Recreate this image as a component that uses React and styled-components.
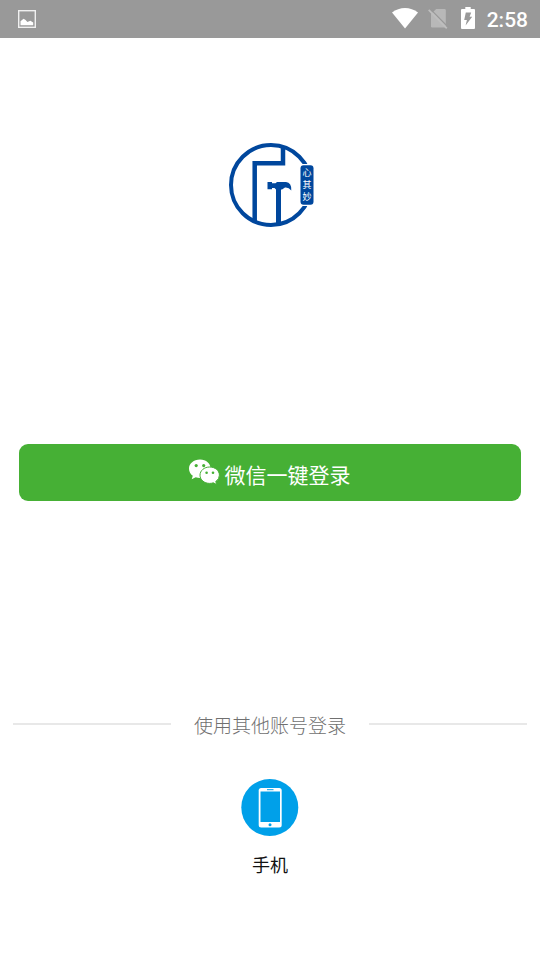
import React from 'react';
import styled, { createGlobalStyle } from 'styled-components';

const App = () => {
    return (
        <>
            <GlobalStyle />
            <StyledPage>
                <StyledStatusBar>
                    <PictureIcon />
                    <StyledStatusGroup>
                        <WifiIcon />
                        <NoSimIcon />
                        <StyledBattery>
                            <BatteryIcon />
                            <StyledTime>2:58</StyledTime>
                        </StyledBattery>
                    </StyledStatusGroup>
                </StyledStatusBar>

                <StyledMain>
                    <StyledLogoBox>
                        <Logo />
                    </StyledLogoBox>

                    <StyledWechatBtn type="button">
                        <WechatIcon />
                        <StyledBtnText>微信一键登录</StyledBtnText>
                    </StyledWechatBtn>

                    <StyledDivider>
                        <StyledLine />
                        <StyledDividerText>使用其他账号登录</StyledDividerText>
                        <StyledLine />
                    </StyledDivider>

                    <StyledPhoneBtn type="button">
                        <PhoneIcon />
                        <span>手机</span>
                    </StyledPhoneBtn>
                </StyledMain>
            </StyledPage>
        </>
    )
}

const PictureIcon = () => (
    <svg width="20" height="20" viewBox="0 0 20 20">
        <rect x="1.7" y="1.7" width="16.6" height="16.6" fill="none" stroke="#f0f0f0" strokeWidth="1.4" />
        <path d="M3.5 16.3V12.2L5 11L6.6 9.8L8.6 11L10.4 13L13.4 11.8L16.2 13.4V16.3Z" fill="#fff" />
    </svg>
)

const WifiIcon = () => (
    <svg width="28" height="22" viewBox="0 0 28 22">
        <path d="M1 5.6C8.5 -0.5 19.5 -0.5 27 5.6L14 21.6Z" fill="#fff" />
    </svg>
)

const NoSimIcon = () => (
    <svg width="22" height="22" viewBox="0 0 22 22">
        <path d="M4 7L9.2 2H17.5Q18.8 2 18.8 3.3V20.5H5.3Q4 20.5 4 19.2Z" fill="#b8b8b8" />
        <path d="M3.2 1.8L21 20" stroke="#999" strokeWidth="1.2" />
        <path d="M1.700 2.800L19.800 21.300" stroke="#bebebe" strokeWidth="1.800" />
    </svg>
)

const BatteryIcon = () => (
    <svg width="14" height="22" viewBox="0 0 14 22">
        <path d="M4.3 0H9.7V2H13Q14 2 14 3V21Q14 22 13 22H1Q0 22 0 21V3Q0 2 1 2H4.3Z" fill="#fff" />
        <path d="M4.8 5.5H10.2L8.6 9.8H11.2L4.6 18.6L5.9 13H3.2Z" fill="#999" />
    </svg>
)

const Logo = () => (
    <svg width="86" height="86" viewBox="0 0 86 86" role="img" aria-label="心其妙">
        <g fill="none" stroke="#00479d">
            <circle cx="43" cy="43" r="40" strokeWidth="4" />
            <path d="M26.7 79V21.2H55V4" strokeWidth="4.5" />
            <path d="M50.5 45V82" strokeWidth="5" />
        </g>
        <path
            d="M39.5 40H44V41.2H47.5L49 40H58Q63.8 40.8 63.3 48.5Q60.5 45 57 45.5L54 47.5H48L46.5 46H44V47.3H39.5Z"
            fill="#00479d"
        />
        <rect x="71.500" y="22" width="14.500" height="42" rx="3.500" fill="#fff" />
        <rect x="72.500" y="23.300" width="13" height="39.500" rx="3" fill="#00479d" />
        <StyledSeal x="79" y="34">心</StyledSeal>
        <StyledSeal x="79" y="46">其</StyledSeal>
        <StyledSeal x="79" y="58">妙</StyledSeal>
    </svg>
)

const WechatIcon = () => (
    <svg width="32" height="26" viewBox="0 0 32 26">
        <path d="M12 0.5C5.7 0.5 1 4.5 1 9.7C1 12.7 2.5 15 4.8 16.8L3.7 20.2L7.7 18.2Q9.7 18.9 12 18.9C18.3 18.9 22.6 14.9 22.6 9.7C22.6 4.5 18.3 0.5 12 0.5Z" fill="#fff" />
        <path d="M21.7 8C16.2 8 12 11.6 12 16.2C12 20.8 16.2 24.4 21.7 24.4Q23.7 24.4 25.3 23.8L28.7 25.6L27.8 22.5Q31.4 20 31.4 16.2C31.4 11.6 27.2 8 21.7 8Z" fill="#fff" stroke="#46b035" strokeWidth="1" />
        <g fill="#46b035">
            <circle cx="8.2" cy="6.6" r="1.6" />
            <circle cx="15.7" cy="6.6" r="1.6" />
            <circle cx="18.6" cy="13.8" r="1.3" />
            <circle cx="25" cy="13.8" r="1.3" />
        </g>
    </svg>
)

const PhoneIcon = () => (
    <svg width="58" height="58" viewBox="0 0 58 58">
        <circle cx="28.8" cy="28.5" r="28.5" fill="#00a0e9" />
        <rect x="17.7" y="9" width="23" height="39.5" rx="2.5" fill="#fff" />
        <rect x="19.5" y="12.5" width="19.5" height="30.5" fill="#00a0e9" />
        <path d="M26 10.7H32.5" stroke="#00a0e9" strokeWidth="1" />
        <circle cx="29" cy="45.7" r="1.5" fill="#00a0e9" />
    </svg>
)

const GlobalStyle = createGlobalStyle`
  body {
    margin: 0;
    background: #fff;
    font-family: Roboto, "Noto Sans CJK SC", sans-serif;
  }
`

const StyledPage = styled.div`
  min-height: 100vh;

  display: flex;
  flex-direction: column;
`

const StyledStatusBar = styled.header`
  height: 38px;
  padding: 0 12px 0 17px;
  box-sizing: border-box;
  background: #999;

  display: flex;
  align-items: center;
  justify-content: space-between;
`

const StyledStatusGroup = styled.div`
  padding-bottom: 2px;

  display: flex;
  align-items: center;
  gap: 8px;
`

const StyledBattery = styled.div`
  margin-left: 4px;

  display: flex;
  align-items: center;
  gap: 12px;
`

const StyledTime = styled.span`
  padding-top: 4px;
  color: #fff;
  font-size: 21px;
  font-weight: 500;
  line-height: 24px;
`

const StyledMain = styled.main`
  padding-top: 104px;

  display: flex;
  flex-direction: column;
`

const StyledLogoBox = styled.div`
  height: 86px;
  padding-left: 2px;

  display: flex;
  justify-content: center;
`

const StyledSeal = styled.text`
  fill: #fff;
  font-family: "Noto Sans CJK SC", sans-serif;
  font-size: 9px;
  text-anchor: middle;
`

const StyledWechatBtn = styled.button`
  height: 57px;
  margin: 216px 19px 0;
  padding: 0 2px 0 0;
  border: none;
  border-radius: 9px;
  background: #46b035;
  color: #fff;
  font-family: inherit;
  cursor: pointer;

  display: flex;
  align-items: center;
  justify-content: center;
  gap: 5px;

  svg {
    margin-bottom: 2px;
  }
`

const StyledBtnText = styled.span`
  padding-top: 6px;
  font-size: 21px;
  line-height: 30px;
`

const StyledDivider = styled.div`
  margin: 205px 13px 0;

  display: flex;
  align-items: center;
  gap: 23px;
`

const StyledLine = styled.span`
  height: 2px;
  background: #e8e8e8;

  flex: 1;
`

const StyledDividerText = styled.span`
  padding-top: 6px;
  color: #707070;
  font-size: 19px;
  font-weight: 300;
  line-height: 30px;
`

const StyledPhoneBtn = styled.button`
  margin-top: 37px;
  padding: 0;
  border: none;
  background: none;
  color: #111;
  font-family: inherit;
  font-size: 18px;
  line-height: 26px;
  cursor: pointer;

  display: flex;
  flex-direction: column;
  align-items: center;
  align-self: center;
  gap: 16px;
`

export default App;
